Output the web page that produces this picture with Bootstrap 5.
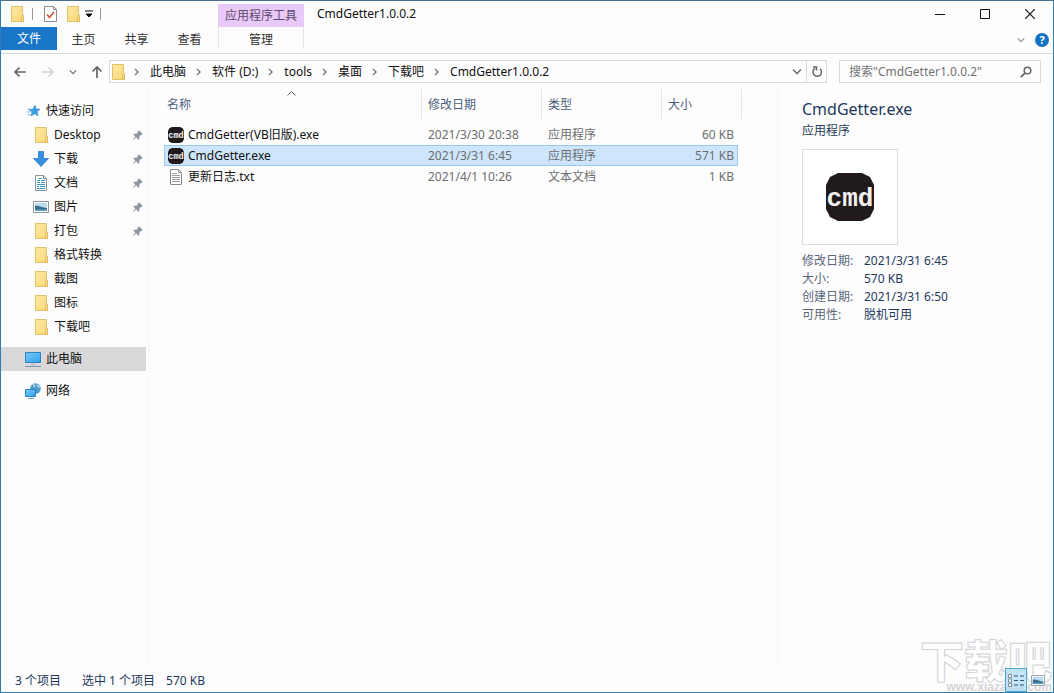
<!DOCTYPE html>
<html lang="zh-CN">
<head>
<meta charset="utf-8">
<meta name="viewport" content="width=device-width, initial-scale=1">
<title>CmdGetter1.0.0.2</title>
<link href="https://cdn.jsdelivr.net/npm/bootstrap@5.3.0/dist/css/bootstrap.min.css" rel="stylesheet">
<style>
  body { font: 12px/18px "Noto Sans", "Noto Sans CJK SC", sans-serif; color: #111; background: #fdfdfe; }
  button { font: inherit; color: inherit; background: none; border: 0; padding: 0; }
  a { color: inherit; text-decoration: none; }
  svg { display: block; flex: none; }
  .explorer { border: 1px solid #2c7fb5; border-top-color: #47708f; }
  .ribbon { height: 53px; border-bottom: 1px solid #dadbdc; }
  .quick { height: 26px; width: 217px; padding-left: 8px; }
  .quick-sep { width: 1px; height: 12px; background: #999; margin: 0 7px; }
  .tabs-row button { height: 23px; width: 53px; padding-top: 2px; color: #333; }
  .tabs-row .file-tab { width: 56px; padding-top: 0; background: #1a76c6; color: #fff; }
  .tool-tab { width: 86px; margin-top: 3px; }
  .tool-head { height: 23px; line-height: 23px; background: #e9c9fa; color: #5d4a6b; text-align: center; }
  .tool-tab button { height: 22px; padding-top: 3px; border: solid #e4e2e6; border-width: 0 1px; color: #333; }
  .title-text { padding: 4px 0 0 13px; }
  .win-btn { width: 45px; height: 25px; }
  .win-group { margin-right: 1px; }
  .ribbon-tools { padding-right: 4px; gap: 10px; }
  .addr-row { height: 35px; padding: 0 12px 0 8px; }
  .nav-arrows { width: 100px; gap: 14px; }
  .addr-box { border: 1px solid #d9d9d9; height: 23px; }
  .crumbs li { display: flex; align-items: center; }
  .crumbs a { padding: 0 10px; }
  .addr-box .refresh { width: 20px; height: 21px; border-left: 1px solid #d9d9d9; }
  .search-box { width: 202px; margin-left: 12px; padding: 0 8px 0 9px; }
  .search-box input { border: 0; outline: 0; background: none; width: 100%; padding: 0; color: #666; min-width: 0; }
  .search-box input::placeholder { color: #737373; opacity: 1; }
  .side-pane { width: 148px; padding: 10px 2px 0 0; border-right: 1px solid #f6f6f8; }
  .side-pane a { height: 24px; padding: 0 3px 0 24px; gap: 5px; display: flex; align-items: center; }
  .side-pane .sub { padding-left: 32px; }
  .side-pane .current { background: #d9d8da; }
  .list-pane { padding: 0 36px 0 15px; }
  .files { table-layout: fixed; border-collapse: separate; border-spacing: 0; width: 100%; max-width: 574px; color: #6d6d6d; }
  .files th { height: 30px; font-weight: 400; color: #4c607a; padding: 2px 0 0 6px; border-left: 1px solid #e5e5e5; position: relative; }
  .files th:first-child { border-left: 0; padding-left: 3px; }
  .files th:last-child::after { content: ""; position: absolute; top: 0; right: -4px; width: 1px; height: 30px; background: #e5e5e5; }
  .files .sort { position: absolute; left: 123px; top: 2px; }
  .files td { height: 21px; line-height: 19px; padding: 0 0 0 7px; border: solid transparent; border-width: 1px 0; white-space: nowrap; }
  .files td:first-child { border-left-width: 1px; padding-left: 3px; color: #111; }
  .files td:last-child { border-right-width: 1px; padding: 0 3px 0 0; text-align: right; }
  .files .gap-row td { height: 5px; border: 0; }
  .files .picked td { background: #cde6fd; border-color: #99c9ef; }
  .files .col-when, .files .col-type { width: 120px; }
  .files .col-size { width: 77px; }
  .detail-pane { width: 276px; padding: 8px 0 0 24px; border-left: 1px solid #f4f4f6; color: #1e395b; }
  .detail-pane h1 { font-size: 16px; line-height: 24px; font-weight: 400; margin: 0; }
  .kind { line-height: 20px; }
  .thumb { width: 96px; height: 96px; border: 1px solid #dcdcde; background: #fff; margin: 8px 0 7px; }
  .facts { display: grid; grid-template-columns: 62px 1fr; margin: 0; }
  .facts dt { font-weight: 400; color: #5a6779; }
  .facts dd { margin: 0; }
  .status { height: 24px; padding-left: 14px; color: #1e395b; }
  .status span { padding-top: 2px; }
  .status span + span { margin-left: 21px; }
  .status span + .size { margin-left: 11px; }
  .view-btn { width: 22px; height: 24px; display: flex; align-items: center; justify-content: center; }
  .view-btn.on { background: rgba(172, 219, 246, .7); border: 1px solid #4ea6cf; }
  .wmark { position: absolute; right: 1px; bottom: 0; text-align: right; pointer-events: none; color: #fff; }
  .wmark .big { font: 900 44px/46px "Noto Sans CJK SC", sans-serif; -webkit-text-stroke: 1px #d2d2d5; }
  .wmark .site { font: 700 12px/10px "Liberation Sans", sans-serif; color: #d4d4d8; }
</style>
</head>
<body>
<svg width="0" height="0" class="position-absolute" aria-hidden="true">
  <defs>
    <linearGradient id="gold" x1="0" x2="1" y1="0" y2="1"><stop offset="0" stop-color="#fdeaa7"/><stop offset="1" stop-color="#f8d775"/></linearGradient>
    <linearGradient id="screen" x1="0" x2="1" y1="0" y2="1"><stop offset="0" stop-color="#7cc9f7"/><stop offset="1" stop-color="#2ba0ee"/></linearGradient>
    <symbol id="folder" viewBox="0 0 16 16"><path d="M2.500.5h11v9.500l1 .5v5h-12z" fill="url(#gold)" stroke="#e3c266"/><path d="M12.500 15.500v-5l1-1h1v6z" fill="#fae08c" stroke="#dcb95c"/></symbol>
    <symbol id="pin" viewBox="0 0 12 12"><path d="M6.500 1 8 .5 11.500 4 11 5.500H9.500L8 7.500V10L7 10.500 4.800 8.300.5 11.500 3.700 7.200 1.500 5 2 4h2.500l2-1.500z" fill="#8d96a3"/></symbol>
    <symbol id="chev" viewBox="0 0 6 8"><path d="M1 1l3 3-3 3" fill="none" stroke="#777" stroke-width="1.400"/></symbol>
    <symbol id="down" viewBox="0 0 10 7"><path d="M1 1.500l4 4 4-4" fill="none" stroke="currentColor" stroke-width="1.600"/></symbol>
    <symbol id="cmd" viewBox="0 0 48 48"><path d="M12 0H36L44 4 48 12V36L44 44 36 48H12L4 44 0 36V12L4 4z" fill="#211a1b"/><text x="24" y="33" text-anchor="middle" font-family="Liberation Mono" font-size="26" font-weight="700" fill="#f1eff0">cmd</text></symbol>
    <symbol id="photo" viewBox="0 0 16 12"><path d="M.5.5h15v11H.5z" fill="#fff" stroke="#8e959b"/><path d="M2 2h12v8H2z" fill="#b9def2"/><path d="M2 5c3-1 5 1 12 2v3H2z" fill="#3c6c86"/><path d="M2 8.500h12V10H2z" fill="#5fa3ca"/></symbol>
  </defs>
</svg>

<div class="explorer vh-100 d-flex flex-column position-relative overflow-hidden">
  <header class="ribbon d-flex flex-shrink-0">
    <div>
      <div class="quick d-flex align-items-center">
        <svg width="16" height="16"><use href="#folder"/></svg>
        <i class="quick-sep"></i>
        <button aria-label="属性" class="ms-1"><svg width="13" height="16" viewBox="0 0 13 16"><path d="M.5.5h9l3 3v12H.5z" fill="#fff" stroke="#8c8c8c"/><path d="M9.500.5v3h3" fill="none" stroke="#8c8c8c"/><path d="M3 8.500l2.500 3L10 6" fill="none" stroke="#d4573a" stroke-width="1.700"/></svg></button>
        <button aria-label="新建文件夹" class="ms-2"><svg width="16" height="16"><use href="#folder"/></svg></button>
        <button aria-label="自定义" class="ms-1"><svg width="8" height="8" viewBox="0 0 8 8"><path d="M0 1h8M1 4h6L4 7z" stroke="#111" fill="#111"/></svg></button>
        <i class="quick-sep"></i>
      </div>
      <div class="tabs-row d-flex"><button class="file-tab">文件</button><button>主页</button><button>共享</button><button>查看</button></div>
    </div>
    <div class="tool-tab d-flex flex-column"><div class="tool-head">应用程序工具</div><button>管理</button></div>
    <div class="title-text flex-grow-1">CmdGetter1.0.0.2</div>
    <div class="d-flex flex-column align-items-end">
      <div class="win-group d-flex">
        <button class="win-btn d-flex align-items-center justify-content-center" aria-label="最小化"><svg width="10" height="10"><path d="M0 5.500h10" stroke="#111"/></svg></button>
        <button class="win-btn d-flex align-items-center justify-content-center" aria-label="最大化"><svg width="10" height="10"><path d="M.5.5h9v9h-9z" stroke="#111" fill="none"/></svg></button>
        <button class="win-btn d-flex align-items-center justify-content-center" aria-label="关闭"><svg width="10" height="10"><path d="M0 0l10 10M10 0L0 10" stroke="#111" stroke-width="1.200"/></svg></button>
      </div>
      <div class="ribbon-tools d-flex align-items-center flex-grow-1">
        <button aria-label="展开功能区" class="text-secondary opacity-75"><svg width="8" height="6"><use href="#down"/></svg></button>
        <button aria-label="帮助"><svg width="14" height="14" viewBox="0 0 14 14"><circle cx="7" cy="7" r="7" fill="#1572c2"/><text x="7" y="11" text-anchor="middle" font-size="11" font-weight="700" fill="#fff">?</text></svg></button>
      </div>
    </div>
  </header>

  <div class="addr-row d-flex align-items-center flex-shrink-0">
    <div class="nav-arrows d-flex align-items-center ps-1">
      <button aria-label="后退"><svg width="14" height="12" viewBox="0 0 14 12"><path d="M13 6H2M6.500 1.500L2 6l4.500 4.500" fill="none" stroke="#666" stroke-width="1.700"/></svg></button>
      <button aria-label="前进"><svg width="14" height="12" viewBox="0 0 14 12"><path d="M1 6h11M7.500 1.500L12 6l-4.500 4.500" fill="none" stroke="#d2d2d2" stroke-width="1.700"/></svg></button>
      <button aria-label="最近位置" class="text-secondary"><svg width="8" height="6"><use href="#down"/></svg></button>
      <button aria-label="向上"><svg width="12" height="14" viewBox="0 0 12 14"><path d="M6 13V2M1.500 6.500L6 2l4.500 4.500" fill="none" stroke="#666" stroke-width="1.700"/></svg></button>
    </div>
    <nav class="addr-box d-flex align-items-center flex-grow-1" aria-label="地址">
      <svg width="16" height="16" class="me-2"><use href="#folder"/></svg>
      <ol class="crumbs list-unstyled d-flex m-0 flex-grow-1">
        <li><svg width="6" height="8"><use href="#chev"/></svg><a href="#">此电脑</a></li>
        <li><svg width="6" height="8"><use href="#chev"/></svg><a href="#">软件 (D:)</a></li>
        <li><svg width="6" height="8"><use href="#chev"/></svg><a href="#">tools</a></li>
        <li><svg width="6" height="8"><use href="#chev"/></svg><a href="#">桌面</a></li>
        <li><svg width="6" height="8"><use href="#chev"/></svg><a href="#">下载吧</a></li>
        <li><svg width="6" height="8"><use href="#chev"/></svg><a href="#">CmdGetter1.0.0.2</a></li>
      </ol>
      <button aria-label="历史记录" class="me-1 text-secondary"><svg width="10" height="7"><use href="#down"/></svg></button>
      <button aria-label="刷新" class="refresh d-flex align-items-center justify-content-center"><svg width="12" height="12" viewBox="0 0 12 12"><path d="M9 2.700A4.300 4.300 0 1 1 4 2.300M2 1h3.500v3.500" fill="none" stroke="#666" stroke-width="1.500"/></svg></button>
    </nav>
    <label class="addr-box search-box d-flex align-items-center">
      <input type="text" placeholder='搜索"CmdGetter1.0.0.2"' aria-label="搜索">
      <svg width="12" height="12" viewBox="0 0 12 12"><circle cx="7.500" cy="4.500" r="3.300" fill="none" stroke="#666" stroke-width="1.500"/><path d="M5.200 6.900L.8 11.200" stroke="#666" stroke-width="1.800"/></svg>
    </label>
  </div>

  <main class="d-flex flex-grow-1 overflow-hidden">
    <nav class="side-pane flex-shrink-0" aria-label="导航窗格">
      <a href="#"><svg width="16" height="16" viewBox="0 0 17 16"><path d="M10.500 2l1.400 4 4 .1-3.200 2.500 1.200 4.400-3.600-2.300-3.700 2.500.9-4.400L4 6.500l4.500-.3z" fill="#3aa0e8" stroke="#2484cc" stroke-width=".7"/><path d="M3 6h3M2 9h3.500M3 12h3" stroke="#66b8ee"/></svg>快速访问</a>
      <a href="#" class="sub"><svg width="16" height="16"><use href="#folder"/></svg>Desktop<svg width="11" height="11" class="ms-auto"><use href="#pin"/></svg></a>
      <a href="#" class="sub"><svg width="16" height="16" viewBox="0 0 16 16"><path d="M5.500.5h5v7h5L8 15.500.5 7.500h5z" fill="#378fe0" stroke="#2b79c4" stroke-width=".8"/></svg>下载<svg width="11" height="11" class="ms-auto"><use href="#pin"/></svg></a>
      <a href="#" class="sub"><svg width="16" height="16" viewBox="0 0 16 16"><path d="M2.500.5h8l3 3v12h-11z" fill="#fff" stroke="#8a949c"/><path d="M10.500.5v3h3" fill="none" stroke="#8a949c"/><path d="M4 5.500h3M8 5.500h4M4 7.500h3M8 7.500h4M4 9.500h8M4 11.500h2M7 11.500h5M4 13.500h8M5.500 3.500h3" stroke="#3a94c6"/></svg>文档<svg width="11" height="11" class="ms-auto"><use href="#pin"/></svg></a>
      <a href="#" class="sub"><svg width="16" height="12"><use href="#photo"/></svg>图片<svg width="11" height="11" class="ms-auto"><use href="#pin"/></svg></a>
      <a href="#" class="sub"><svg width="16" height="16"><use href="#folder"/></svg>打包<svg width="11" height="11" class="ms-auto"><use href="#pin"/></svg></a>
      <a href="#" class="sub"><svg width="16" height="16"><use href="#folder"/></svg>格式转换</a>
      <a href="#" class="sub"><svg width="16" height="16"><use href="#folder"/></svg>截图</a>
      <a href="#" class="sub"><svg width="16" height="16"><use href="#folder"/></svg>图标</a>
      <a href="#" class="sub"><svg width="16" height="16"><use href="#folder"/></svg>下载吧</a>
      <a href="#" class="current mt-2"><svg width="16" height="16" viewBox="0 0 16 16"><path d="M.5 1.500h15v10H.5z" fill="url(#screen)" stroke="#2a83bd"/><path d="M6 13.500h4" stroke="#a9b6c0"/><path d="M0 15.500h16" stroke="#7995a8"/></svg>此电脑</a>
      <a href="#" class="mt-2"><svg width="16" height="16" viewBox="0 0 16 16"><circle cx="10.500" cy="5.500" r="5.300" fill="#4f9cc8"/><path d="M8 1.500c2 .5 1 2 2 2.500M12 2c1 1 2 1 2.500 2.500" stroke="#c6e5f2" fill="none" stroke-width="1.300"/><path d="M.5 6.500h10v7H.5z" fill="url(#screen)" stroke="#2a83bd"/><path d="M3 15.500h6" stroke="#69a7cc"/></svg>网络</a>
    </nav>

    <section class="list-pane flex-grow-1">
      <table class="files">
        <colgroup><col><col class="col-when"><col class="col-type"><col class="col-size"></colgroup>
        <thead><tr><th>名称<svg class="sort" width="9" height="5" viewBox="0 0 9 5"><path d="M.5 4.500l4-4 4 4" fill="none" stroke="#666"/></svg></th><th>修改日期</th><th>类型</th><th>大小</th></tr></thead>
        <tbody>
          <tr class="gap-row"><td colspan="4"></td></tr>
          <tr><td><div class="d-flex align-items-center gap-1"><svg width="16" height="16"><use href="#cmd"/></svg>CmdGetter(VB旧版).exe</div></td><td>2021/3/30 20:38</td><td>应用程序</td><td>60 KB</td></tr>
          <tr class="picked"><td><div class="d-flex align-items-center gap-1"><svg width="16" height="16"><use href="#cmd"/></svg>CmdGetter.exe</div></td><td>2021/3/31 6:45</td><td>应用程序</td><td>571 KB</td></tr>
          <tr><td><div class="d-flex align-items-center gap-1"><svg width="16" height="16" viewBox="0 0 16 16"><path d="M2.500.5h8l3 3v12h-11z" fill="#fff" stroke="#8b8b8b"/><path d="M10.500.5v3h3M4 4.500h5M4 6.500h8M4 8.500h8M4 10.500h8M4 12.500h8" fill="none" stroke="#9b9b9b"/></svg>更新日志.txt</div></td><td>2021/4/1 10:26</td><td>文本文档</td><td>1 KB</td></tr>
        </tbody>
      </table>
    </section>

    <aside class="detail-pane flex-shrink-0">
      <h1>CmdGetter.exe</h1>
      <div class="kind">应用程序</div>
      <div class="thumb d-flex align-items-center justify-content-center"><svg width="48" height="48"><use href="#cmd"/></svg></div>
      <dl class="facts">
        <dt>修改日期:</dt><dd>2021/3/31 6:45</dd>
        <dt>大小:</dt><dd>570 KB</dd>
        <dt>创建日期:</dt><dd>2021/3/31 6:50</dd>
        <dt>可用性:</dt><dd>脱机可用</dd>
      </dl>
    </aside>
  </main>

  <div class="wmark" aria-hidden="true"><div class="big">下载吧</div><div class="site">www.xiazaiba.com</div></div>

  <footer class="status d-flex align-items-center flex-shrink-0 position-relative">
    <span>3 个项目</span><span>选中 1 个项目</span><span class="size">570 KB</span>
    <div class="d-flex ms-auto me-1">
      <button class="view-btn on" aria-label="详细信息"><svg width="16" height="13" viewBox="0 0 16 13"><path d="M.5.5h3v3h-3zM.5 5h3v3h-3zM.5 9.500h3v3h-3z" fill="#fff" stroke="#7b8d99"/><path d="M6 2h4M12 2h4M6 6.500h4M12 6.500h4M6 11h4M12 11h4" stroke="#3c5566"/></svg></button>
      <button class="view-btn" aria-label="大图标"><svg width="14" height="11"><use href="#photo"/></svg></button>
    </div>
  </footer>
</div>
<script src="https://cdn.jsdelivr.net/npm/bootstrap@5.3.0/dist/js/bootstrap.bundle.min.js"></script>
</body>
</html>
